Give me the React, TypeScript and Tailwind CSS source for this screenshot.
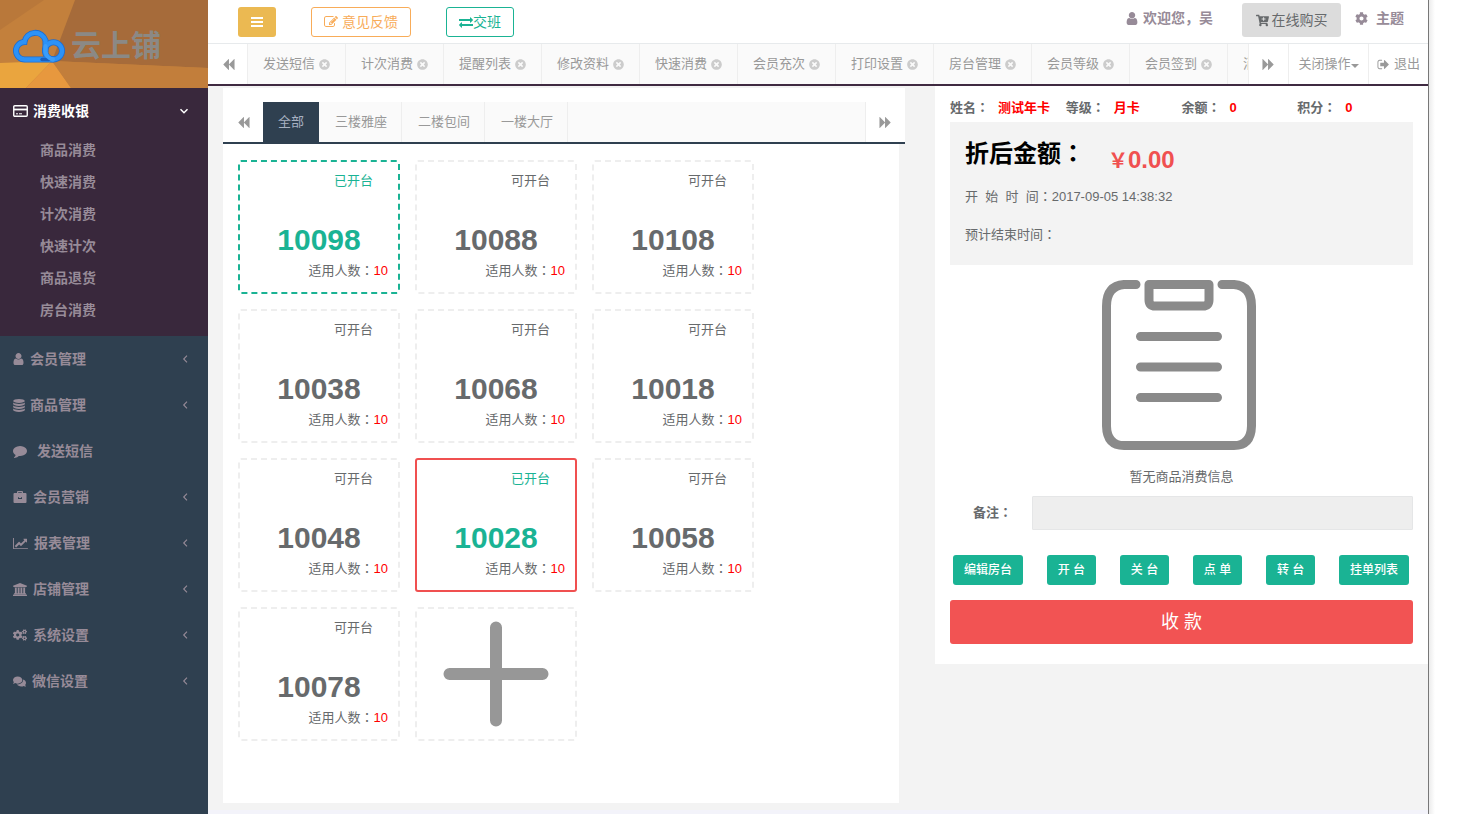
import React from 'react';
import { FaCartPlus, FaCog, FaCogs, FaComments, FaTimesCircle } from 'react-icons/fa';

type IconProps = { className?: string };

const glyph = (d: string, box = '0 0 1792 1792') =>
  function Glyph({ className }: IconProps) {
    return (
      <svg viewBox={box} fill="currentColor" aria-hidden="true" className={className}>
        <path d={d} fillRule="evenodd" />
      </svg>
    );
  };

const UserIcon = glyph(
  'M1536 1399q0 109-62.5 187t-150.5 78h-854q-88 0-150.5-78t-62.5-187q0-85 8.5-160.5t31.5-152 58.5-131 94-89 134.5-34.5q131 128 313 128t313-128q76 0 134.5 34.5t94 89 58.5 131 31.5 152 8.5 160.5zm-256-887q0 159-112.5 271.5t-271.5 112.5-271.5-112.5-112.5-271.5 112.5-271.5 271.5-112.5 271.5 112.5 112.5 271.5z',
  '256 0 1280 1792',
);
const BackwardIcon = glyph(
  'M1683 141q19-19 32-13t13 32v1472q0 26-13 32t-32-13l-710-710q-9-9-13-19v710q0 26-13 32t-32-13l-710-710q-19-19-19-45t19-45l710-710q19-19 32-13t13 32v710q4-10 13-19z',
);
const ForwardIcon = glyph(
  'M109 1651q-19 19-32 13t-13-32v-1472q0-26 13-32t32 13l710 710q9 9 13 19v-710q0-26 13-32t32 13l710 710q19 19 19 45t-19 45l-710 710q-19 19-32 13t-13-32v-710q-4 10-13 19z',
);
const CommentIcon = glyph(
  'M1792 896q0 174-120 321.5t-326 233-450 85.5q-70 0-145-8-198 175-460 242-49 14-114 22-17 2-30.5-9t-17.5-29v-1q-3-4-.5-12t2-10 4.5-9.5l6-9 7-8.5 8-9q7-8 31-34.5t34.5-38 31-39.5 32.5-51 27-59 26-76q-157-89-247.5-220t-90.5-281q0-130 71-248.5t191-204.5 286-136.5 348-50.5q244 0 450 85.5t326 233 120 321.5z',
);
const ChartIcon = glyph(
  'M2048 1536v128h-2048v-1536h128v1408h1920zm-128-1248v435q0 21-19.5 29.5t-35.5-7.5l-121-121-633 633q-10 10-23 10t-23-10l-233-233-416 416-192-192 585-585q10-10 23-10t23 10l233 233 464-464-121-121q-16-16-7.5-35.5t29.5-19.5h435q14 0 23 9t9 23z',
  '0 0 2048 1792',
);
const BankIcon = glyph(
  'M960 0l960 384v128h-128q0 26-20.5 45t-48.5 19h-1526q-28 0-48.5-19t-20.5-45h-128v-128zm-704 640h256v768h128v-768h256v768h128v-768h256v768h128v-768h256v768h59q28 0 48.5 19t20.5 45v64h-1664v-64q0-26 20.5-45t48.5-19h59v-768zm1595 960q28 0 48.5 19t20.5 45v128h-1920v-128q0-26 20.5-45t48.5-19h1782z',
  '0 0 1920 1792',
);
const BriefcaseIcon = glyph(
  'M4 2V1a1 1 0 0 1 1-1h4a1 1 0 0 1 1 1v1h2.500a1 1 0 0 1 1 1v8a1 1 0 0 1-1 1H1.500a1 1 0 0 1-1-1V3a1 1 0 0 1 1-1zM5.200 1.200V2h3.600v-.8zM5 6.200h1v.9h2v-.9h1v1.900H5z',
  '0 0 14 12',
);
const EditIcon = glyph(
  'M888 1184l116-116-152-152-116 116v56h96v96h56zm440-720q-16-16-33 1l-350 350q-17 17-1 33t33-1l350-350q17-17 1-33zm80 594v190q0 119-84.5 203.5t-203.5 84.5h-832q-119 0-203.5-84.5t-84.5-203.5v-832q0-119 84.5-203.5t203.5-84.5h832q63 0 117 25 15 7 18 23 3 17-9 29l-49 49q-14 14-32 8-23-6-45-6h-832q-66 0-113 47t-47 113v832q0 66 47 113t113 47h832q66 0 113-47t47-113v-126q0-13 9-22l64-64q15-15 35-7t20 29zm-96-738l288 288-672 672h-288v-288zm444 132l-92 92-288-288 92-92q28-28 68-28t68 28l152 152q28 28 28 68t-28 68z',
);
const ExchangeIcon = glyph(
  'M1792 1184v192q0 13-9.5 22.5t-22.5 9.5h-1376v192q0 13-9.5 22.5t-22.5 9.5q-12 0-24-10l-319-320q-9-9-9-22 0-14 9-23l320-320q9-9 23-9 13 0 22.5 9.5t9.5 22.5v192h1376q13 0 22.5 9.5t9.5 22.5zm0-544q0 14-9 23l-320 320q-9 9-23 9-13 0-22.5-9.5t-9.5-22.5v-192h-1376q-13 0-22.5-9.5t-9.5-22.5v-192q0-13 9.5-22.5t22.5-9.5h1376v-192q0-14 9-23t23-9q12 0 24 10l319 319q9 9 9 23z',
);
const SignOutIcon = glyph(
  'M704 1440q0 4 1 20t.5 26.5-3 23.5-10 19.5-20.5 6.5h-320q-119 0-203.5-84.5t-84.5-203.5v-704q0-119 84.5-203.5t203.5-84.5h320q13 0 22.5 9.5t9.5 22.5q0 4 1 20t.5 26.5-3 23.5-10 19.5-20.5 6.5h-320q-66 0-113 47t-47 113v704q0 66 47 113t113 47h312l11.5 1 11.5 3 8 5.5 7 9 2 13.5zm928-544q0 26-19 45l-544 544q-19 19-45 19t-45-19-19-45v-288h-448q-26 0-45-19t-19-45v-384q0-26 19-45t45-19h448v-288q0-26 19-45t45-19 45 19l544 544q19 19 19 45z',
);
const BarsIcon = glyph('M0 0h12v2H0zM0 4h12v2H0zM0 8h12v2H0z', '0 0 12 10');
const CaretIcon = glyph('M0 0h8L4 4z', '0 0 8 4');
const DatabaseIcon = glyph(
  'M6 0c3.300 0 6 .9 6 2s-2.700 2-6 2-6-.9-6-2 2.700-2 6-2zM0 3.600c1.200 1 3.500 1.500 6 1.500s4.800-.5 6-1.500v1.600c0 1.100-2.700 2-6 2s-6-.9-6-2zM0 6.700c1.200 1 3.500 1.500 6 1.500s4.800-.5 6-1.500v1.600c0 1.100-2.700 2-6 2s-6-.9-6-2zM0 9.800c1.200 1 3.500 1.500 6 1.500s4.800-.5 6-1.500v1.600c0 1.100-2.700 2-6 2s-6-.9-6-2z',
  '0 0 12 13.4',
);

function CardIcon({ className }: IconProps) {
  return (
    <svg viewBox="0 0 15 12" fill="none" stroke="currentColor" aria-hidden="true" className={className}>
      <rect x="0.750" y="0.750" width="13.500" height="10.500" rx="1" strokeWidth="1.400" />
      <path d="M1 4.500h13" strokeWidth="1.800" />
      <path d="M3 8.800h2M6 8.800h3" strokeWidth="1" />
    </svg>
  );
}

function AngleIcon({ down }: { down?: boolean }) {
  return (
    <svg viewBox="0 0 10 10" fill="none" stroke="currentColor" strokeWidth={down ? 1.5 : 1.1} aria-hidden="true" className="size-2.5">
      <path d={down ? 'M1.500 3.300L5 6.700 8.500 3.300' : 'M6 1.700L2.700 5 6 8.300'} />
    </svg>
  );
}

/* Full-width colon set in the middle of its square. */
function Colon() {
  return <span className="font-['Noto_Sans_CJK_JP',sans-serif] leading-none">：</span>;
}

const subMenu = ['商品消费', '快速消费', '计次消费', '快速计次', '商品退货', '房台消费'];

const menu: { label: string; icon: React.ComponentType<IconProps>; iconClass: string; arrow: boolean }[] = [
  { label: '会员管理', icon: UserIcon, iconClass: 'mr-1.5 h-[14px] w-[11px]', arrow: true },
  { label: '商品管理', icon: DatabaseIcon, iconClass: 'mr-[5px] h-[13px] w-[12px]', arrow: true },
  { label: '发送短信', icon: CommentIcon, iconClass: 'mr-2.5 h-[14px] w-[14px]', arrow: false },
  { label: '会员营销', icon: BriefcaseIcon, iconClass: 'mr-1.5 h-[12px] w-[14px]', arrow: true },
  { label: '报表管理', icon: ChartIcon, iconClass: 'mr-1.5 h-[13px] w-[15px]', arrow: true },
  { label: '店铺管理', icon: BankIcon, iconClass: 'mr-1.5 h-[13px] w-[14px]', arrow: true },
  { label: '系统设置', icon: FaCogs, iconClass: 'mr-1.5 h-[14px] w-[14px]', arrow: true },
  { label: '微信设置', icon: FaComments, iconClass: 'mr-1.5 h-[13px] w-[13px]', arrow: true },
];

const pageTabs = [
  '发送短信', '计次消费', '提醒列表', '修改资料', '快速消费', '会员充次',
  '打印设置', '房台管理', '会员等级', '会员签到', '消费统计',
];

const areas = ['全部', '三楼雅座', '二楼包间', '一楼大厅'];

type Room = { no: string; open?: boolean; selected?: boolean };
const rooms: Room[] = [
  { no: '10098', open: true },
  { no: '10088' },
  { no: '10108' },
  { no: '10038' },
  { no: '10068' },
  { no: '10018' },
  { no: '10048' },
  { no: '10028', open: true, selected: true },
  { no: '10058' },
  { no: '10078' },
];

const member = [
  { label: '姓名', value: '测试年卡' },
  { label: '等级', value: '月卡' },
  { label: '余额', value: '0' },
  { label: '积分', value: '0' },
];

const actions = ['编辑房台', '开 台', '关 台', '点 单', '转 台', '挂单列表'];

function Logo() {
  return (
    <div className="grid h-[88px] overflow-hidden">
      <svg viewBox="0 0 208 88" preserveAspectRatio="none" className="col-start-1 row-start-1 h-[88px] w-full" aria-hidden="true">
        <rect width="208" height="88" fill="#c3803c" />
        <path d="M0 0H44L0 30z" fill="#b9783a" />
        <path d="M75 0H208V68L52 61z" fill="#a66b3a" />
        <path d="M0 63L52 61 26 88H0z" fill="#eaa53e" />
        <path d="M52 61L71 88H26z" fill="#e7983e" />
        <path d="M52 61L208 68V88H71z" fill="#c27e3b" />
      </svg>
      <div className="col-start-1 row-start-1 flex items-center gap-1.5 pl-[13px] pt-1">
        <svg viewBox="0 0 52 36" className="h-[36px] w-[52px]" fill="none" strokeLinecap="round" aria-hidden="true">
          <g stroke="#1c6cd0" strokeWidth="6">
            <path d="M40 31.500H12A8.600 8.600 0 0 1 11.500 14A10.800 10.800 0 0 1 32.500 12.500V23" />
            <circle cx="40.500" cy="22.800" r="8.500" />
          </g>
          <g stroke="#2c92f7" strokeWidth="4.400">
            <path d="M40 31.500H12A8.600 8.600 0 0 1 11.500 14A10.800 10.800 0 0 1 32.500 12.500V23" />
            <circle cx="40.500" cy="22.800" r="8.500" />
          </g>
          <path d="M29 31.500H36" stroke="#1a5fbe" strokeWidth="3.500" />
          <path d="M32.500 18V23.500Q33.500 30 40 31.500" stroke="#3b9dfa" strokeWidth="4" />
        </svg>
        <span className="text-[30px] font-bold leading-9 text-[#8b8985]">云上铺</span>
      </div>
    </div>
  );
}

function Sidebar() {
  return (
    <aside className="w-52 shrink-0 bg-[#2f4050] text-sm font-semibold text-[#978b98]">
      <Logo />
      <nav>
        <div className="bg-[#39283c] pb-2.5">
          <a href="#cashier" className="flex h-[46px] items-center pl-[13px] pr-[19px] text-white">
            <CardIcon className="mr-[5px] h-[12px] w-[15px]" />
            <span className="flex-1">消费收银</span>
            <AngleIcon down />
          </a>
          <ul>
            {subMenu.map((item) => (
              <li key={item}>
                <a href="#sub" className="flex h-8 items-center pl-10">{item}</a>
              </li>
            ))}
          </ul>
        </div>
        <ul>
          {menu.map(({ label, icon: Icon, iconClass, arrow }) => (
            <li key={label}>
              <a href="#menu" className="flex h-[46px] items-center pl-[13px] pr-[17px]">
                <Icon className={iconClass} />
                <span className="flex-1">{label}</span>
                {arrow && <AngleIcon />}
              </a>
            </li>
          ))}
        </ul>
      </nav>
    </aside>
  );
}

function TopBar() {
  return (
    <header className="flex h-11 items-start border-b border-[#e7eaec] bg-white pl-[30px] pr-6 text-sm">
      <button type="button" aria-label="菜单" className="mt-[7px] flex h-[30px] w-[38px] items-center justify-center rounded-[3px] bg-[#ebb952] text-white">
        <BarsIcon className="h-[10px] w-[12px]" />
      </button>
      <button type="button" className="ml-[35px] mt-[7px] flex h-[30px] w-[100px] items-center justify-center gap-1 rounded-[3px] border border-[#f8ac59] text-[#f8ac59]">
        <EditIcon className="size-[14px]" />
        意见反馈
      </button>
      <button type="button" className="ml-[35px] mt-[7px] flex h-[30px] w-[68px] items-center justify-center rounded-[3px] border border-[#1ab394] text-[#1ab394]">
        <ExchangeIcon className="size-[14px]" />
        交班
      </button>
      <div className="ml-auto flex items-start font-semibold text-[#978b98]">
        <span className="flex h-9 items-center gap-[5px]">
          <UserIcon className="h-[15px] w-[12px]" />
          欢迎您，吴
        </span>
        <button type="button" className="ml-[29px] mt-[3px] flex h-[34px] w-[99px] items-center justify-center gap-[3px] rounded-[3px] bg-[#dcdcdc] font-normal text-[#676a6c]">
          <FaCartPlus className="size-[13px]" />
          在线购买
        </button>
        <a href="#theme" className="ml-3.5 flex h-9 items-center gap-2">
          <FaCog className="size-[13px]" />
          主题
        </a>
      </div>
    </header>
  );
}

function PageTabs() {
  return (
    <div className="flex h-[42px] border-b-2 border-[#3f2a41] bg-white text-[13px] text-[#999]">
      <button type="button" aria-label="向左" className="flex w-10 shrink-0 items-center justify-center border-r border-[#eee] pl-px">
        <BackwardIcon className="size-[13px]" />
      </button>
      <div className="flex min-w-0 flex-1 overflow-hidden bg-[#fafafa]">
        {pageTabs.map((tab) => (
          <a key={tab} href="#tab" className="flex w-[98px] shrink-0 items-center gap-1 border-r border-[#eee] pl-[15px]">
            {tab}
            <FaTimesCircle className="size-[11px] text-[#ccc]" />
          </a>
        ))}
      </div>
      <button type="button" aria-label="向右" className="flex w-10 shrink-0 items-center justify-center border-l border-[#eee]">
        <ForwardIcon className="size-[13px]" />
      </button>
      <button type="button" className="flex w-20 shrink-0 items-center justify-center border-l border-[#eee]">
        关闭操作
        <CaretIcon className="mt-1 h-[4px] w-[8px]" />
      </button>
      <a href="#logout" className="flex w-[60px] shrink-0 items-center justify-center gap-1 border-l border-[#eee]">
        <SignOutIcon className="size-[13px]" />
        退出
      </a>
    </div>
  );
}

function RoomCard({ no, open, selected }: Room) {
  const frame = selected
    ? 'border-solid border-[#f05050]'
    : open
      ? 'border-dashed border-[#1ab394]'
      : 'border-dashed border-[#eee]';
  return (
    <button type="button" className={`flex h-[134px] w-[162px] flex-col rounded-[3px] border-2 pt-2.5 ${frame}`}>
      <span className={`h-[18px] self-end pr-[25px] leading-[18px] ${open ? 'text-[#1ab394]' : ''}`}>
        {open ? '已开台' : '可开台'}
      </span>
      <strong className={`mt-8 self-center text-[30px] leading-9 ${open ? 'text-[#1ab394]' : ''}`}>{no}</strong>
      <span className="mt-[3px] self-end pr-2.5 leading-5">
        适用人数<Colon /><span className="text-[#f00]">10</span>
      </span>
    </button>
  );
}

function RoomPanel() {
  return (
    <section className="min-w-0 flex-1">
      <div className="flex h-14 border-b-2 border-[#2f4050] bg-white pt-3.5 text-[13px] text-[#999]">
        <button type="button" aria-label="向左" className="flex w-10 shrink-0 items-center justify-center">
          <BackwardIcon className="size-[13px]" />
        </button>
        <div className="flex min-w-0 flex-1 overflow-hidden bg-[#fafafa]">
          {areas.map((area, i) => (
            <button
              key={area}
              type="button"
              className={i === 0 ? 'bg-[#2f4050] px-[15px] text-[#a7b1c2]' : 'border-r border-[#eee] pl-4 pr-[14px]'}
            >
              {area}
            </button>
          ))}
        </div>
        <button type="button" aria-label="向右" className="flex w-10 shrink-0 items-center justify-center border-l border-[#eee]">
          <ForwardIcon className="size-[13px]" />
        </button>
      </div>
      <div className="mr-1.5 flex min-h-[659px] flex-wrap content-start gap-[15px] bg-white pl-[15px] pt-4">
        {rooms.map((room) => (
          <RoomCard key={room.no} {...room} />
        ))}
        <button type="button" aria-label="添加房台" className="flex h-[134px] w-[162px] items-center justify-center rounded-[3px] border-2 border-dashed border-[#eee]">
          <svg viewBox="0 0 106 106" className="size-[106px]" stroke="#979797" strokeWidth="12" strokeLinecap="round" aria-hidden="true">
            <path d="M53 6.500v93M6.500 53h93" />
          </svg>
        </button>
      </div>
    </section>
  );
}

function OrderPanel() {
  return (
    <section className="w-[42%] max-w-[493px] shrink-0 bg-white px-[15px] pb-5">
      <dl className="grid h-9 grid-cols-4 items-center pt-2 font-bold">
        {member.map(({ label, value }) => (
          <div key={label} className="flex gap-[9px] whitespace-nowrap">
            <dt>{label}<Colon /></dt>
            <dd className="text-[#f00]">{value}</dd>
          </div>
        ))}
      </dl>
      <div className="h-[143px] bg-[#f3f3f3] px-[15px] pt-4">
        <div className="flex items-start gap-[23px] text-2xl font-bold">
          <h2 className="leading-8 text-black">折后金额<Colon /></h2>
          <span className="pt-1 leading-9 text-[#f05050]"><span className="text-xl">￥</span>0.00</span>
        </div>
        <p className="mt-[9px] leading-5">
          开&nbsp; 始&nbsp; 时&nbsp; 间<Colon />2017-09-05 14:38:32
        </p>
        <p className="mt-[18px] leading-5">预计结束时间<Colon /></p>
      </div>
      <div className="flex flex-col items-center pt-[15px]">
        <svg viewBox="0 0 160 170" className="h-[170px] w-[160px]" fill="none" stroke="#8a8a8a" strokeWidth="9" strokeLinecap="round" aria-hidden="true">
          <path d="M34 4.500H22Q4.500 6 4.500 26V146Q5 165.500 22 165.500H132Q149 165.500 149.500 146V26Q149.500 6 132 4.500H120" />
          <path d="M47 4.500H107V20Q107 26 101 26H53Q47 26 47 20z" strokeLinejoin="round" />
          <path d="M38.500 56.500h77M38.500 87h77M38.500 117.500h77" />
        </svg>
        <p className="mt-[17px] leading-5">暂无商品消费信息</p>
      </div>
      <div className="mt-[9px] flex items-center">
        <label htmlFor="note" className="w-[82px] shrink-0 pl-[23px] font-bold">备注<Colon /></label>
        <input id="note" type="text" disabled className="h-[34px] min-w-0 flex-1 rounded-[1px] border border-[#e5e6e7] bg-[#eee] px-3" />
      </div>
      <div className="mt-[25px] flex justify-between pl-[3px] pr-1">
        {actions.map((action) => (
          <button key={action} type="button" className="h-[30px] whitespace-nowrap rounded-[3px] bg-[#1ab394] px-[11px] text-xs font-medium text-white">
            {action}
          </button>
        ))}
      </div>
      <button type="button" className="mt-[15px] h-11 w-full rounded-[3px] bg-[#f25353] text-lg text-white">
        收 款
      </button>
    </section>
  );
}

export default function App() {
  return (
    <div className="flex min-h-screen bg-white font-['Liberation_Sans','Noto_Sans_CJK_SC',sans-serif] text-[13px] text-[#676a6c]">
      <Sidebar />
      <div className="flex min-w-0 flex-1 flex-col">
        <TopBar />
        <PageTabs />
        <main className="flex flex-1 items-start gap-[30px] border-b-4 border-[#f3f3fa] bg-[#f3f3f3] pl-[15px]">
          <div className="flex min-w-0 flex-1 pt-0.5">
            <RoomPanel />
          </div>
          <OrderPanel />
        </main>
      </div>
      <div className="w-8 shrink-0 border-l border-[#777]">
        <div className="h-full w-1.5 bg-linear-to-r from-[#ececec] to-white" />
      </div>
    </div>
  );
}
